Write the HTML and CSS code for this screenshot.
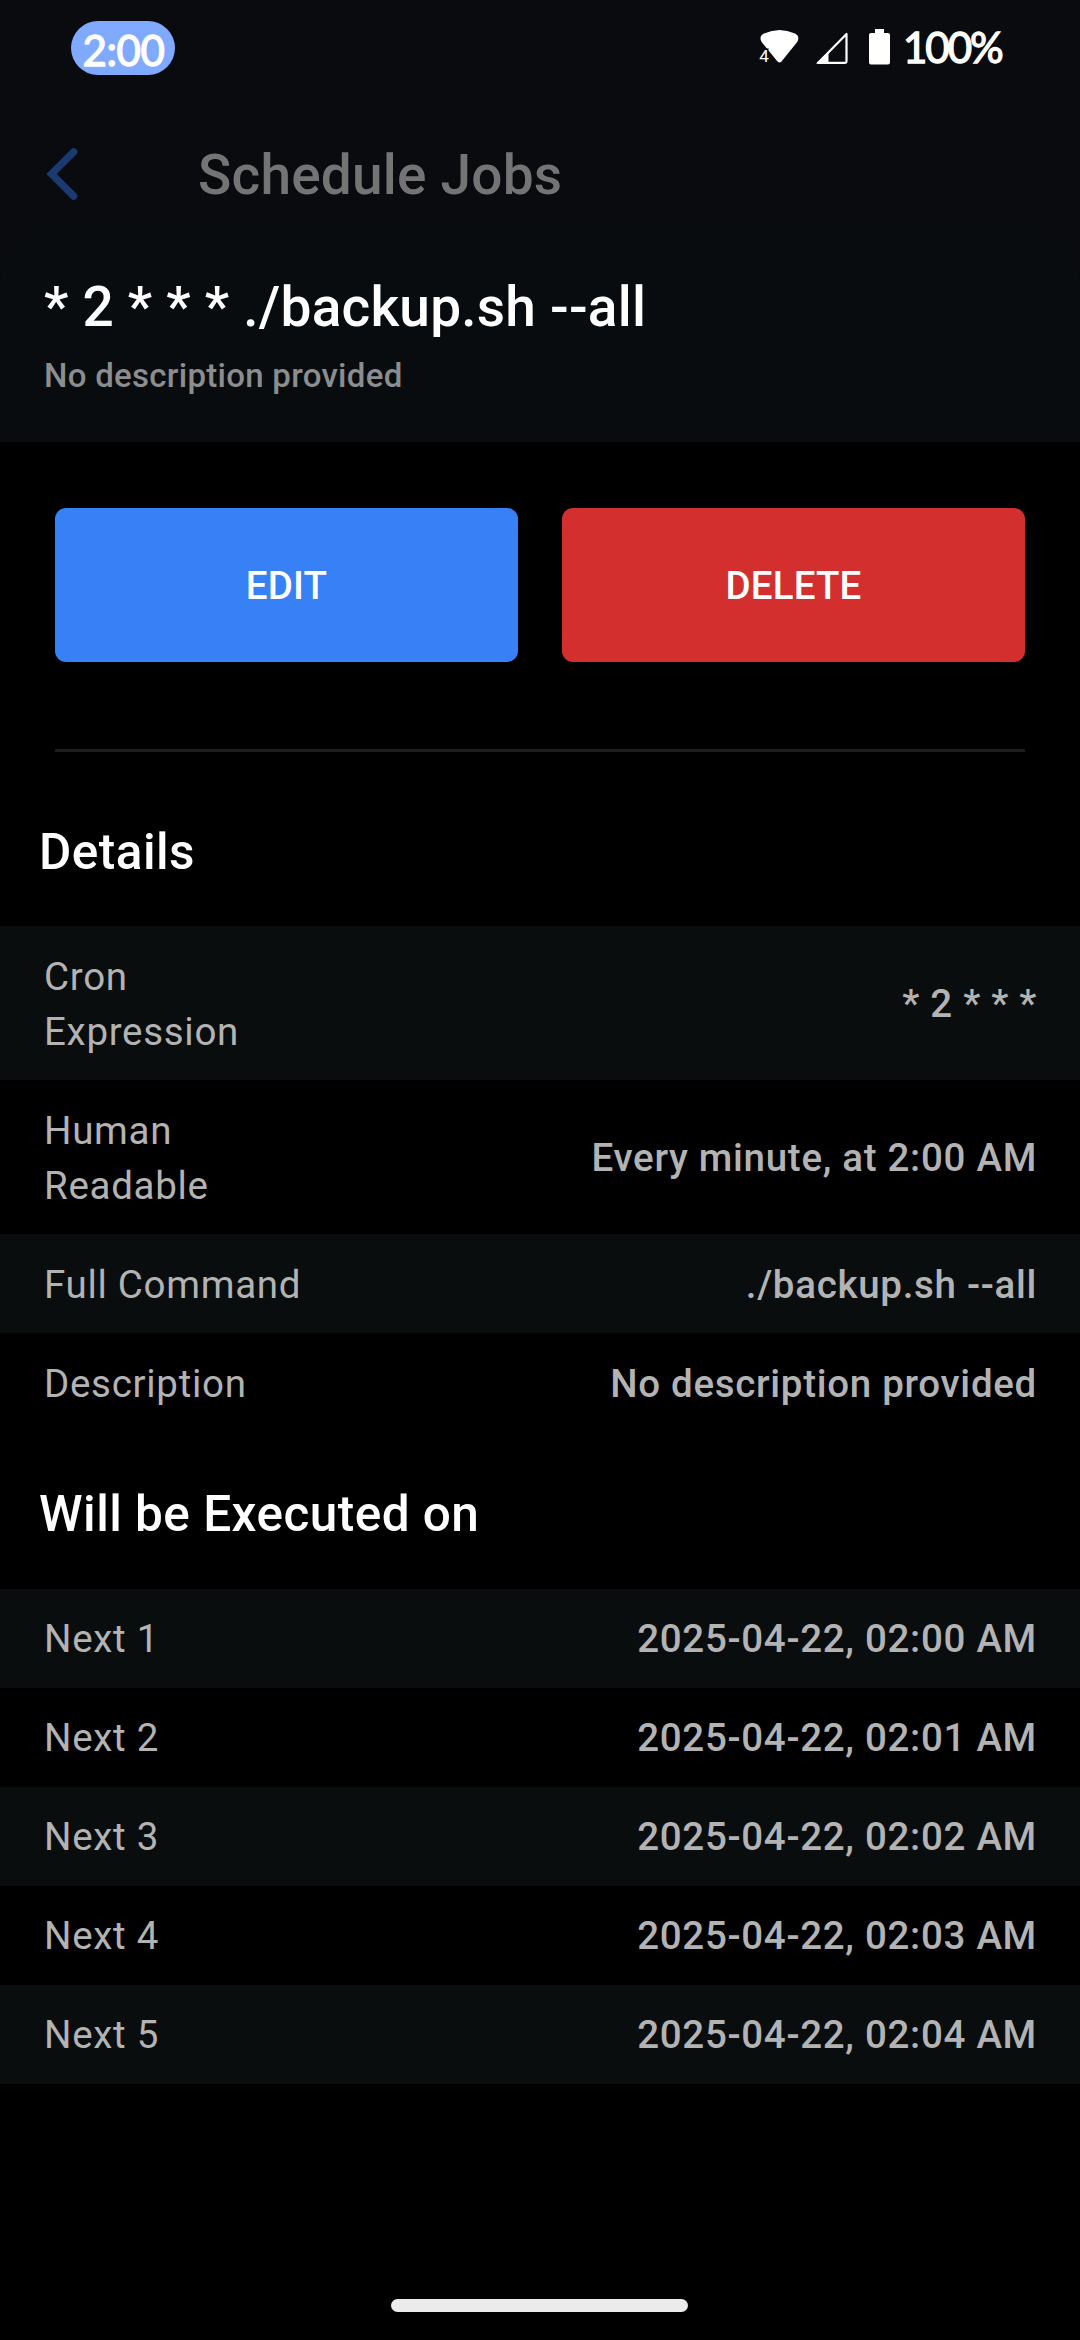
FILE: index.html
```html
<!DOCTYPE html>
<html lang="en">
<head>
<meta charset="utf-8">
<title>Schedule Jobs</title>
<link rel="stylesheet" href="styles.css">
</head>
<body>
<div class="screen">
  <div class="top">
    <div class="status">
      <div class="clock">2:00</div>
      <div class="indicators">
        <svg class="wifi" width="42" height="40" viewBox="0 0 42 40">
          <path d="M3.600 11.500Q3 7.500 7 5.600Q22.500-1.500 38 5.600Q42 7.500 41.200 11.500Q41 13 39.800 14.500L24.500 33.500Q22.500 35.500 20.500 33.500L5 14.500Q4 13 3.600 11.500Z" fill="#fff"/>
          <text x="2.200" y="34.300" class="wifi-gen">4</text>
        </svg>
        <svg class="signal" width="34" height="40" viewBox="0 0 34 40">
          <path d="M3 34.900L31.500 6V33.600Q31.500 34.900 30.200 34.900Z" fill="none" stroke="#fff" stroke-width="2.200" stroke-linejoin="round"/>
          <path d="M1 35.500L13.500 23.500V35.500Z" fill="#fff"/>
        </svg>
        <svg class="battery" width="21" height="40" viewBox="0 0 21 40">
          <path d="M6 1H15V5H19Q21 5 21 7V34.500Q21 36.500 19 36.500H2Q0 36.500 0 34.500V7Q0 5 2 5H6Z" fill="#fff"/>
        </svg>
        <span class="level">100%</span>
      </div>
    </div>
    <header class="bar">
      <svg class="back" width="40" height="60" viewBox="0 0 40 60">
        <path d="M31.700 7.800L9.500 30L31.700 52.200" fill="none" stroke="#1b3a72" stroke-width="7.300" stroke-linecap="round"/>
      </svg>
      <h1 class="bar-title">Schedule Jobs</h1>
    </header>
    <section class="summary">
      <h2 class="command">* 2 * * * ./backup.sh --all</h2>
      <p class="note">No description provided</p>
    </section>
  </div>

  <div class="actions">
    <button class="btn btn-edit">EDIT</button>
    <button class="btn btn-delete">DELETE</button>
  </div>
  <div class="divider"></div>

  <h3 class="heading heading-details">Details</h3>
  <dl class="list list-details">
    <div class="row row-tall"><dt>Cron Expression</dt><dd>* 2 * * *</dd></div>
    <div class="row row-tall"><dt>Human Readable</dt><dd>Every minute, at 2:00 AM</dd></div>
    <div class="row"><dt class="wide">Full Command</dt><dd>./backup.sh --all</dd></div>
    <div class="row"><dt>Description</dt><dd>No description provided</dd></div>
  </dl>

  <h3 class="heading heading-runs">Will be Executed on</h3>
  <dl class="list">
    <div class="row"><dt>Next 1</dt><dd>2025-04-22, 02:00 AM</dd></div>
    <div class="row"><dt>Next 2</dt><dd>2025-04-22, 02:01 AM</dd></div>
    <div class="row"><dt>Next 3</dt><dd>2025-04-22, 02:02 AM</dd></div>
    <div class="row"><dt>Next 4</dt><dd>2025-04-22, 02:03 AM</dd></div>
    <div class="row"><dt>Next 5</dt><dd>2025-04-22, 02:04 AM</dd></div>
  </dl>

  <div class="home"></div>
</div>
</body>
</html>
```

FILE: styles.css
```css
* { box-sizing: border-box; margin: 0; padding: 0; }

body { background: #000; font-family: Roboto, sans-serif; color: #fff; }

.screen {
  width: 1080px;
  height: 2340px;
  display: flex;
  flex-direction: column;
  overflow: hidden;
}

.top { background: #0a0b0f; flex: none; }

/* Status bar */
.status {
  height: 96px;
  padding: 21px 79px 0 71px;
  display: flex;
  justify-content: space-between;
  align-items: flex-start;
}
.clock, .level {
  font-family: Lato, sans-serif;
  font-size: 42px;
  line-height: 48px;
  color: #fff;
  -webkit-text-stroke: 1.3px #fff;
  stroke-linejoin: round;
}
.clock {
  width: 104px;
  height: 54px;
  padding: 5px 0 0 1px;
  border-radius: 27px;
  background: #80aaff;
  text-align: center;
  letter-spacing: -0.4px;
}
.indicators { display: flex; align-items: flex-start; padding-top: 7px; }
.signal { margin-left: 16px; }
.battery { margin-left: 20px; }
.level { width: 98px; margin: -5px 0 0 13px; white-space: nowrap; letter-spacing: -2px; }
.wifi-gen {
  font: 17px Roboto, sans-serif;
  fill: #fff;
  stroke: #0a0b0f;
  stroke-width: 3px;
  paint-order: stroke;
}

/* App bar */
.bar { height: 131px; padding: 47px 0 0 42px; display: flex; align-items: flex-start; }
.back { margin-top: 1px; }
.bar-title {
  margin-left: 116px;
  font-size: 55px;
  line-height: 64px;
  font-weight: 500;
  letter-spacing: 0.2px;
  color: #747474;
}

.summary {
  height: 215px;
  padding: 45px 44px 0;
  border-top: 3px solid #0a0b0c;
  border-radius: 55px 55px 0 0;
  background: #080c0e;
}
.command { font-size: 55px; line-height: 64px; font-weight: 500; letter-spacing: 0.22px; }
.note {
  margin-top: 17px;
  font-size: 33px;
  line-height: 40px;
  font-weight: 500;
  letter-spacing: 0.28px;
  color: #8b8d8e;
}

/* Buttons */
.actions { display: flex; gap: 44px; margin: 66px 55px 0; }
.btn {
  flex: 1;
  height: 154px;
  border: 0;
  border-radius: 11px;
  color: #fff;
  font: 500 38.5px/55px Roboto, sans-serif;
  letter-spacing: 0.14px;
}
.btn-edit { background: #3880f6; }
.btn-delete { background: #d32f2f; }
.divider { flex: none; height: 3px; margin: 87px 55px 0; background: #1c1c1c; }

/* Lists */
.heading {
  margin-left: 39px;
  font-size: 49.5px;
  line-height: 60px;
  font-weight: 500;
  letter-spacing: 0.47px;
}
.heading-details { margin-top: 70px; margin-bottom: 44px; }
.heading-runs { margin-top: 52px; margin-bottom: 45px; }

.row {
  display: flex;
  justify-content: space-between;
  align-items: center;
  padding: 22px 43px 22px 44px;
  font-size: 38.5px;
  line-height: 55px;
  color: #b3b3b3;
}
.list-details .row { padding-top: 23px; padding-bottom: 21px; }
.row:nth-child(odd) { background: #090d0e; }
.row dt { width: 210px; letter-spacing: 0.7px; }
.row dt.wide { width: 270px; }
.row dd { font-weight: 500; letter-spacing: 0.7px; white-space: nowrap; }
.row-tall dd { padding-bottom: 2px; }

.home {
  flex: none;
  width: 297px;
  height: 13px;
  margin: auto 0 28px 391px;
  border-radius: 6.5px;
  background: #ebebeb;
}
```
